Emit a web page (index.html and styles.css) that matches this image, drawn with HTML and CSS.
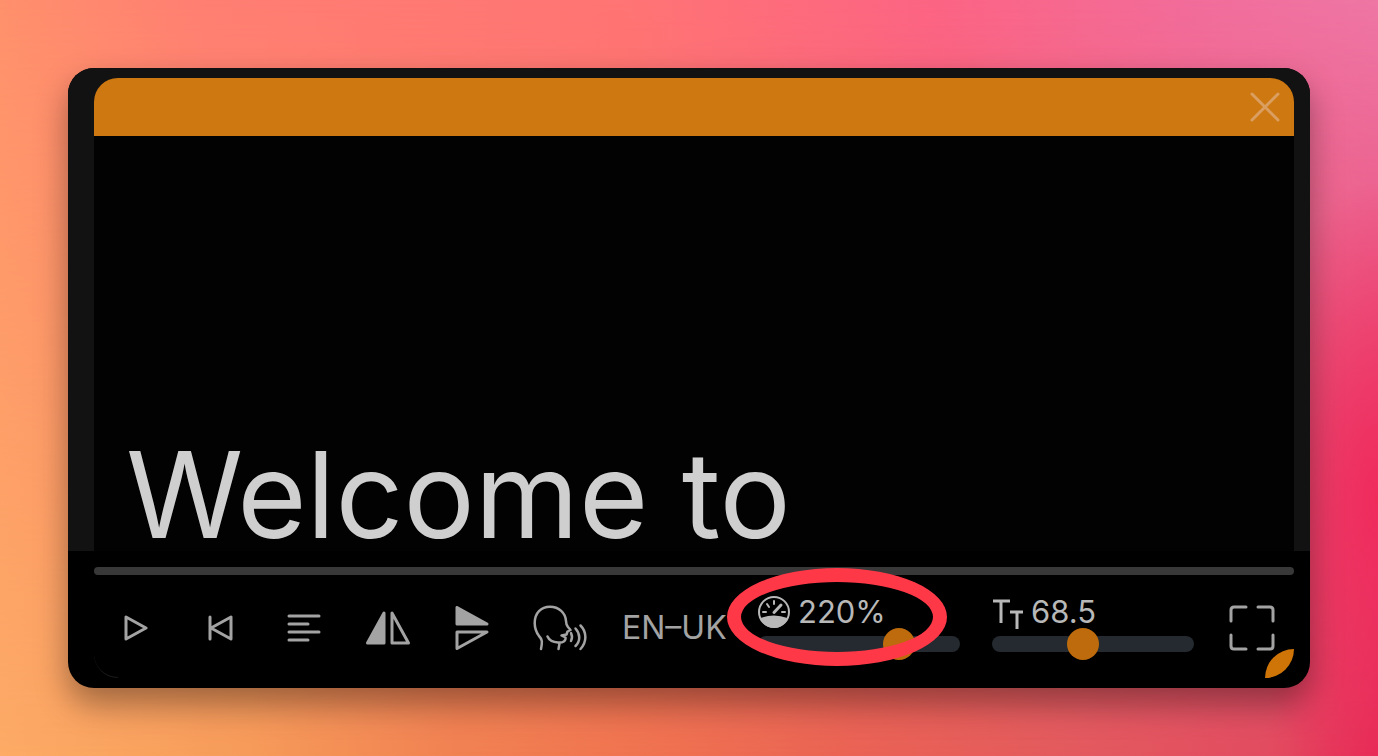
FILE: index.html
```html
<!DOCTYPE html>
<html lang="en">
  <head>
    <meta charset="UTF-8" />
    <meta name="viewport" content="width=device-width, initial-scale=1.0" />
    <title>Teleprompter</title>
    <link rel="stylesheet" href="styles.css">
  </head>
  <body>
    <main class="window">
      <section class="screen">
        <header class="titlebar">
          <button class="close" type="button" aria-label="Close">
            <svg width="30" height="30" viewBox="0 0 30 30"><path d="M2 2 28 28M28 2 2 28" /></svg>
          </button>
        </header>
        <p class="script-text">Welcome to</p>
      </section>

      <footer class="footer">
        <progress class="progress" value="0" max="100" aria-label="Progress"></progress>
        <div class="controls">
          <button class="control" type="button" aria-label="Play">
            <svg width="24" height="26" viewBox="0 0 24 26"><path d="M2 2V24L22 13Z" /></svg>
          </button>
          <button class="control" type="button" aria-label="Back to start">
            <svg width="26" height="26" viewBox="0 0 26 26"><path d="M3 2V24M24 2V24L4 13Z" /></svg>
          </button>
          <button class="control" type="button" aria-label="Align text">
            <svg width="34" height="30" viewBox="0 0 34 30"><path d="M2 3H32M2 11H21M2 19H32M2 27H21" /></svg>
          </button>
          <button class="control" type="button" aria-label="Mirror horizontally">
            <svg width="44" height="34" viewBox="0 0 44 34">
              <path class="solid" d="M18 2V32H1.5Z" />
              <path d="M26 2V32H42.500Z" />
            </svg>
          </button>
          <button class="control" type="button" aria-label="Mirror vertically">
            <svg width="34" height="44" viewBox="0 0 34 44">
              <path class="solid" d="M2 1.500V18H32Z" />
              <path d="M2 26H32L2 42.500Z" />
            </svg>
          </button>
          <button class="control control-voice" type="button" aria-label="Voice">
            <svg class="voice" width="54" height="46" viewBox="0 0 54 46">
              <path d="M8 44C9 38 10 35 6 31C3 27 1.700 23 1.700 18C1.700 8 8 1.700 17 1.700C26 1.700 32.500 8 33 16C33 19 33.500 20 35 22L37.500 25L34.500 26.500L33.500 29.500L28.500 30.500L32.500 32.500C33 36 30 38 25 37.500C19 37 16 35 14.500 31.500M26.500 38.500 25.500 44" />
              <path d="M38 28C39.500 31 39.500 33 38 36M42.500 23.500C47.500 29 47.500 36 42.500 41M47.500 20.500C54 27 54 37 47.500 44" />
            </svg>
          </button>
          <button class="language" type="button">EN–UK</button>

          <div class="sliders">
            <div class="field">
              <label class="field-label" for="speed">
                <svg class="gauge" width="32" height="32" viewBox="0 0 32 32">
                  <circle cx="16" cy="16" r="15" />
                  <path d="M16 5V8M9 8 11 11M5 16H8M24 16H27" />
                  <path class="needle" d="M16 16.500 23 9" />
                  <path class="solid" d="M3 23Q16 18 29 23Q24 31 16 31T3 23Z" />
                </svg>
                220%
              </label>
              <input class="slider" id="speed" type="range" min="0" max="300" value="220">
              <span class="highlight"></span>
            </div>
            <div class="field">
              <label class="field-label" for="size">
                <svg class="type-size" width="31" height="30" viewBox="0 0 31 30"><path d="M1 2H18M9 2V24M18 13H31M25 13V30" /></svg>
                68.5
              </label>
              <input class="slider" id="size" type="range" min="12" max="140" step="0.5" value="68.5">
            </div>
          </div>

          <button class="control" type="button" aria-label="Full screen">
            <svg width="46" height="46" viewBox="0 0 46 46"><path d="M2 16V5Q2 2 5 2H17M29 2H41Q44 2 44 5V16M44 30V41Q44 44 41 44H29M17 44H5Q2 44 2 41V30" /></svg>
          </button>
        </div>
      </footer>
      <span class="resize-handle"></span>
    </main>
  </body>
</html>
```

FILE: styles.css
```css
* {
    box-sizing: border-box;
}

body {
    display: flex;
    min-height: 100vh;
    margin: 0;
    padding: 68px;
    font-family: Inter, "Liberation Sans", sans-serif;
    color: #a3a3a3;
    background: linear-gradient(to right, #fdab66, #f69c5a 18%, #f18252 33%, #f07450 46%, #ea6354 62%, #e35a5e 78%, #e24c60 92%, #e62c56);
}

/* upper colours, fading into the body gradient */
body::before {
    content: "";
    position: absolute;
    inset: 0;
    z-index: -1;
    background: linear-gradient(to right, #ff906c, #ff7e72 15%, #ff7474 45%, #fc6484 68%, #f26c9a 86%, #ee76a4);
    mask-image: linear-gradient(to bottom, #000, transparent);
}

/* red glow on the right edge */
body::after {
    content: "";
    position: absolute;
    inset: 0;
    z-index: -1;
    background: radial-gradient(ellipse 10% 42% at 100% 66%, rgba(240, 40, 90, 0.9), rgba(240, 40, 90, 0));
}

button {
    padding: 0;
    border: 0;
    font: inherit;
    color: inherit;
    background: none;
}

svg {
    display: block;
    fill: none;
    stroke: currentColor;
    stroke-width: 3;
    stroke-linecap: round;
    stroke-linejoin: round;
}

.solid {
    fill: currentColor;
}

.window {
    position: relative;
    display: flex;
    flex: 1;
    flex-direction: column;
    border-radius: 26px;
    background: #000;
    box-shadow: 0 16px 32px rgba(0, 0, 0, 0.36);
}

.screen {
    display: flex;
    flex: 1;
    flex-direction: column;
    padding: 10px 16px 0 26px;
    border-radius: 26px 26px 0 0;
    background: #121212;
}

.titlebar {
    display: flex;
    align-items: center;
    justify-content: flex-end;
    height: 58px;
    padding-right: 14px;
    border-radius: 24px 24px 0 0;
    background: #ce7811;
}

.close {
    color: #d99e60;
}

.script-text {
    display: flex;
    flex: 1;
    align-items: flex-end;
    margin: 0;
    padding-left: 32px;
    font-size: 119px;
    line-height: 112px;
    color: #cfcfcf;
    background: #020202;
}

.footer {
    padding: 16px 16px 8px 26px;
}

.footer::before {
    content: "";
    position: absolute;
    left: 26px;
    bottom: 10px;
    width: 24px;
    height: 24px;
    border-bottom: 1px solid #1c1c1c;
    border-radius: 0 0 0 24px;
}

.progress {
    display: block;
    width: 100%;
    height: 8px;
    appearance: none;
    border: 0;
}

.progress::-webkit-progress-bar {
    border-radius: 4px;
    background: #383838;
}

.controls {
    display: flex;
    align-items: center;
    height: 105px;
}

.control {
    display: flex;
    flex: 0 0 84px;
    align-items: center;
    justify-content: center;
    height: 84px;
}

.control-voice {
    padding-left: 8px;
}

.voice {
    stroke-width: 2.5;
}

.language {
    flex: 0 0 160px;
    padding-left: 24px;
    font-size: 32px;
    text-align: left;
}

.sliders {
    display: flex;
    flex: 1;
    gap: 32px;
    margin-right: 16px;
}

.field {
    position: relative;
    flex: 1;
}

.field-label {
    display: flex;
    align-items: center;
    gap: 8px;
    height: 32px;
    font-size: 31px;
    color: #b8b8b8;
}

.gauge {
    stroke-width: 2;
}

.needle {
    stroke-width: 3;
}

.type-size {
    margin-top: 4px;
    stroke-linecap: butt;
}

.slider {
    display: block;
    width: 100%;
    height: 32px;
    margin: 0;
    appearance: none;
    background: none;
}

.slider::-webkit-slider-runnable-track {
    height: 16px;
    border-radius: 8px;
    background: #242a2f;
}

.slider::-webkit-slider-thumb {
    width: 32px;
    height: 32px;
    margin-top: -8px;
    appearance: none;
    border-radius: 50%;
    background: #bd6b0c;
}

.highlight {
    position: absolute;
    top: -28px;
    left: -31px;
    width: 220px;
    height: 98px;
    border: 14px solid #ff3848;
    border-radius: 50%;
    pointer-events: none;
}

.resize-handle {
    position: absolute;
    right: 16px;
    bottom: 10px;
    width: 29px;
    height: 29px;
    border-radius: 100% 0;
    background: #cf7508;
}
```
